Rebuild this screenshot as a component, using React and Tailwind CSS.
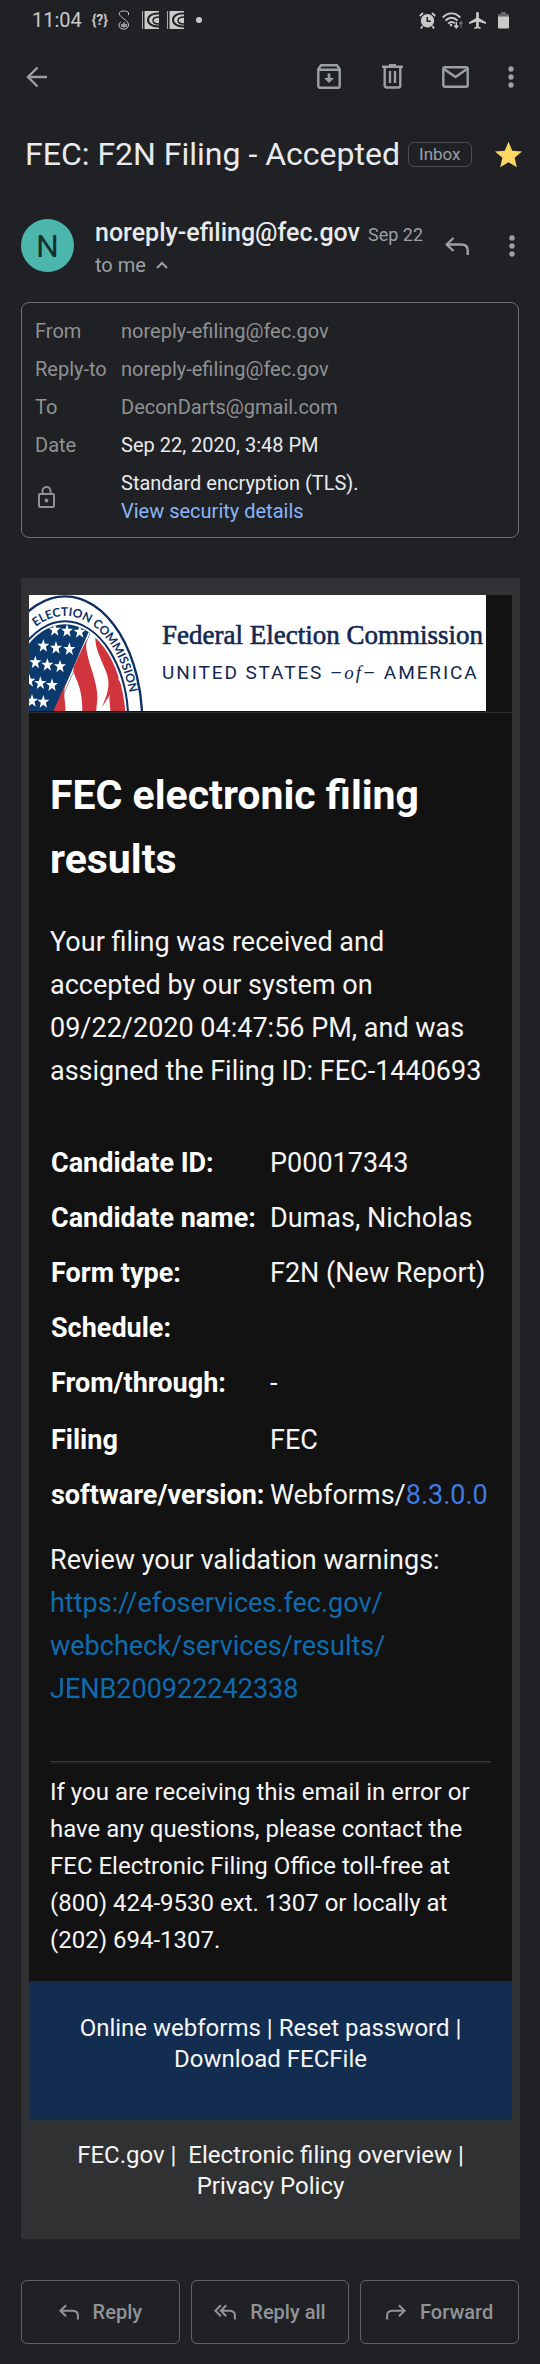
import React from "react";

const messageMeta = [
  { label: "From", value: "noreply-efiling@fec.gov" },
  { label: "Reply-to", value: "noreply-efiling@fec.gov" },
  { label: "To", value: "DeconDarts@gmail.com" },
  { label: "Date", value: "Sep 22, 2020, 3:48 PM", bright: true },
];

const filingRows = [
  { label: "Candidate ID:", value: "P00017343" },
  { label: "Candidate name:", value: "Dumas, Nicholas" },
  { label: "Form type:", value: "F2N (New Report)" },
  { label: "Schedule:", value: "" },
  { label: "From/through:", value: "-" },
];

const flagStars = [
  [80, 112], [117, 115], [155, 118],
  [46, 160], [84, 166], [124, 170],
  [22, 210], [58, 217], [96, 222],
  [4, 265], [37, 272], [72, 278],
  [12, 325], [46, 328],
];

function CrescentIcon() {
  return (
    <svg className="h-[18px] w-[17px]" viewBox="0 0 17 18" aria-hidden="true">
      <path d="M.5 0v18" stroke="#a9aaab" />
      <path d="M2.5 0H17V18H2.500Z" fill="#c9cac9" />
      <path d="M17 2.500C10 2 6 5 6 9c0 4 5 7 11 6.500" fill="none" stroke="#202124" strokeWidth="2" />
      <path d="M17 6c-4 0-6 1-6 3.500S13 13 17 13" fill="none" stroke="#202124" strokeWidth="1.500" />
    </svg>
  );
}

function StatusBar() {
  return (
    <div className="flex h-10 items-center justify-between pr-[31px] pl-8 text-[#c9cac9]">
      <div className="flex items-center">
        <span className="text-xl leading-6">11:04</span>
        <span className="ml-2 w-5 text-center text-sm leading-5 font-bold">{"{?}"}</span>
        <svg className="ml-2 h-5 w-3" viewBox="0 0 12 20" fill="none" stroke="currentColor" aria-hidden="true">
          <path d="M10.500 5V2.500C9.500.7 3 .3 1.500 2.500.5 5 3 6.500 5.500 8.500S10.500 12 10.500 15c0 5.500-9.500 5.500-9.500 0 0-1.500 1-2.500 2-3" strokeWidth="1" />
          <path d="M4 17v-3M6 17.500v-5M8 17v-3" strokeWidth="1.400" />
        </svg>
        <span className="ml-3 flex gap-2">
          <CrescentIcon />
          <CrescentIcon />
        </span>
        <span className="ml-3 size-1.5 rounded-full bg-[#c9cac9]" />
      </div>
      <div className="flex items-center gap-1.5">
        <svg className="size-[17px]" viewBox="0 0 17 17" aria-hidden="true">
          <path d="M.8 4 4 1M16.200 4 13 1M3.500 14 2 16.500M13.500 14l1.500 2.500" stroke="currentColor" strokeWidth="1.800" />
          <circle cx="8.500" cy="8.800" r="6.700" fill="currentColor" />
          <path d="M8.300 5v4.300h3.500" fill="none" stroke="#202124" strokeWidth="1.600" />
        </svg>
        <svg className="h-[17px] w-[21px]" viewBox="0 0 21 17" fill="none" stroke="currentColor" aria-hidden="true">
          <path d="M.8 5.500c5-5.500 12.400-5.500 17.400 0M3.500 8.700c3.500-3.900 8.500-3.900 12 0M6.200 11.600c2-2 4.600-2 6.600-.3" strokeWidth="1.900" />
          <circle cx="9" cy="13" r="1.300" fill="currentColor" stroke="none" />
          <path d="M14.300 10v5.500M12.300 13.500l2 2.300 2-2.300" strokeWidth="1.500" />
          <path d="M19 15.500V10M17.400 11.700 19 10l1.600 1.700" stroke="#77797b" strokeWidth="1.200" />
        </svg>
        <svg className="size-[17px]" viewBox="2 2 19 20" fill="currentColor" preserveAspectRatio="none" aria-hidden="true">
          <path d="M21 16v-2l-8-5V3.500a1.500 1.500 0 0 0-3 0V9l-8 5v2l8-2.500V19l-2 1.500V22l3.500-1 3.500 1v-1.500L13 19v-5.500z" />
        </svg>
        <svg className="ml-1.5 h-[17px] w-[11px]" viewBox="0 0 11 17" aria-hidden="true">
          <path d="M3 0h5v2h3v4H0V2h3Z" fill="#626466" />
          <path d="M0 4.500h11V15.500a1 1 0 0 1-1 1H1a1 1 0 0 1-1-1Z" fill="currentColor" />
        </svg>
      </div>
    </div>
  );
}

function MoreDots() {
  return (
    <svg className="h-[22px] w-1.5" viewBox="0 0 6 22" fill="currentColor" aria-hidden="true">
      <circle cx="3" cy="3" r="2.700" />
      <circle cx="3" cy="11" r="2.700" />
      <circle cx="3" cy="19" r="2.700" />
    </svg>
  );
}

function ReplyArrow({ className }) {
  return (
    <svg className={className} viewBox="0 0 24 18" fill="none" stroke="currentColor" strokeWidth="2.400" aria-hidden="true">
      <path d="M8.500 1 1.700 7.500l6.800 6.500M2 7.500h14.500c4 0 6.200 2.500 6.200 6V18" />
    </svg>
  );
}

function ReplyAllArrow({ className }) {
  return (
    <svg className={className} viewBox="0 0 26 18" fill="none" stroke="currentColor" strokeWidth="2.400" aria-hidden="true">
      <path d="M8 1 1.700 7.500 8 14M14.500 1 8.200 7.500l6.300 6.500M8.500 7.500h10c4 0 6.200 2.500 6.200 6V18" />
    </svg>
  );
}

function Toolbar() {
  return (
    <header className="flex h-[73px] items-center justify-between px-[26px] text-[#9aa0a6]">
      <button type="button" aria-label="Back">
        <svg className="h-[22px] w-[21px]" viewBox="0 0 21 22" fill="none" stroke="currentColor" strokeWidth="2.400" aria-hidden="true">
          <path d="M11.500 1.500 2 11l9.500 9.500M2 11h19" />
        </svg>
      </button>
      <div className="flex items-center">
        <button type="button" aria-label="Archive">
          <svg className="h-[25px] w-6" viewBox="0 0 24 25" fill="none" stroke="currentColor" strokeWidth="2.400" aria-hidden="true">
            <path d="M1.300 5.200 4 1.300h16l2.700 3.900V22a1.700 1.700 0 0 1-1.700 1.700H3A1.700 1.700 0 0 1 1.300 22ZM2 5.800h20" strokeLinejoin="round" />
            <path d="M12 9.500v7" strokeWidth="2.800" />
            <path d="M7 14h10l-5 5z" fill="currentColor" stroke="none" />
          </svg>
        </button>
        <button type="button" aria-label="Delete" className="ml-[41px]">
          <svg className="h-[25px] w-[21px]" viewBox="0 0 21 25" fill="none" stroke="currentColor" strokeWidth="2.400" aria-hidden="true">
            <path d="M0 2.700h21M7 1.200h7" />
            <path d="M2.700 3v18.500a2 2 0 0 0 2 2h11.600a2 2 0 0 0 2-2V3" />
            <path d="M8 7v12M13 7v12" />
          </svg>
        </button>
        <button type="button" aria-label="Mark as unread" className="ml-[39px]">
          <svg className="h-[22px] w-[27px]" viewBox="0 0 27 22" fill="none" stroke="currentColor" strokeWidth="2.400" aria-hidden="true">
            <rect x="1.300" y="1.300" width="24.400" height="19.400" rx="1.800" />
            <path d="m2 3 11.500 8L25 3" />
          </svg>
        </button>
        <button type="button" aria-label="More options" className="ml-[39px]">
          <MoreDots />
        </button>
      </div>
    </header>
  );
}

function FecSeal() {
  return (
    <svg className="h-[116px] w-[114px] shrink-0" viewBox="3 9 342 348" role="img" aria-label="Seal of the Federal Election Commission">
      <defs>
        <clipPath id="shield">
          <ellipse cx="111" cy="393" rx="182" ry="296" />
        </clipPath>
        <path id="ring" d="M-90 393A201 321 0 0 1 312 393" />
      </defs>
      <ellipse cx="111" cy="393" rx="232" ry="380" fill="#fff" stroke="#0f2f63" strokeWidth="7" />
      <ellipse cx="111" cy="393" rx="190" ry="305" fill="#fff" stroke="#0f2f63" strokeWidth="6" />
      <g clipPath="url(#shield)">
        <path d="M0 60h215L86 357H0z" fill="#0b3a6e" />
        <path d="M184 122 82 357" stroke="#fff" strokeWidth="5" />
        {flagStars.map(([x, y]) => (
          <path
            key={`${x}-${y}`}
            d="M0-19 4.500-5 18-5 7.500 4 11 19 0 10-11 19-7.500 4-18-5-4.500-5Z"
            fill="#fff"
            transform={`translate(${x} ${y})`}
          />
        ))}
        <g fill="#d0353d">
          <path d="M176 142C166 190 208 255 208 315 208 335 205 345 205 357H163C163 320 158 290 145 262 138 245 134 235 138 222Z" />
          <path d="M117 264C100 305 115 330 112 357H76Z" />
          <path d="M202 134C235 155 285 215 272 258 260 290 240 315 222 347 235 310 248 290 238 250 228 215 200 175 202 134Z" />
          <path d="M270 260C262 280 247 290 244 318L247 357H300C294 320 285 280 270 260Z" />
        </g>
      </g>
      <text fill="#0f2f63" fontSize="36" className="font-['Lato'] font-bold">
        <textPath href="#ring" startOffset="320">ELECTION COMMISSION</textPath>
      </text>
    </svg>
  );
}

function Banner() {
  return (
    <div className="border-b border-[#2c2d2e] pr-[26px] pb-px">
      <div className="flex h-[116px] bg-white">
        <FecSeal />
        <div className="ml-[19px] flex flex-col pt-5 whitespace-nowrap text-[#12284f]">
          <span className="font-['Liberation_Serif'] text-[27px] leading-10 [-webkit-text-stroke:0.6px_#12284f]">Federal Election Commission</span>
          <span className="text-[19px] leading-9 tracking-widest">
            UNITED STATES –<i className="font-['Liberation_Serif']">of</i>– AMERICA
          </span>
        </div>
      </div>
    </div>
  );
}

function MessageHeader() {
  return (
    <section className="px-[21px]">
      <div className="flex pt-6">
        <div className="flex size-[53px] shrink-0 items-center justify-center rounded-full bg-[#4db6ac] text-[32px] text-[#14302d]">N</div>
        <div className="ml-[21px] flex-1 whitespace-nowrap">
          <div className="flex items-baseline gap-2">
            <span className="text-[25px] leading-7 font-medium text-[#e8eaed]">noreply-efiling@fec.gov</span>
            <span className="text-lg leading-7 text-[#9aa0a6]">Sep 22</span>
          </div>
          <button type="button" className="mt-0.5 flex items-center gap-2.5 text-xl leading-7 text-[#9aa0a6]">
            to me
            <svg className="h-2 w-3" viewBox="0 0 12 8" fill="none" stroke="currentColor" strokeWidth="2" aria-hidden="true">
              <path d="m1 7 5-5 5 5" />
            </svg>
          </button>
        </div>
        <div className="flex h-[53px] items-center gap-10 pr-1 text-[#9aa0a6]">
          <button type="button" aria-label="Reply">
            <ReplyArrow className="h-[18px] w-6" />
          </button>
          <button type="button" aria-label="More options">
            <MoreDots />
          </button>
        </div>
      </div>
      <dl className="mt-[23px] grid grid-cols-[86px_1fr] gap-y-2.5 rounded-lg border border-[#6b6e72] px-[13px] pt-3.5 pb-3 text-xl leading-7 text-[#8f9194]">
        {messageMeta.map((row) => (
          <React.Fragment key={row.label}>
            <dt>{row.label}</dt>
            <dd className={row.bright ? "text-[#e8eaed]" : ""}>{row.value}</dd>
          </React.Fragment>
        ))}
        <dt className="flex items-center pl-[3px]" aria-label="Security">
          <svg className="h-[22px] w-[17px]" viewBox="0 0 17 22" fill="none" stroke="currentColor" strokeWidth="2" aria-hidden="true">
            <rect x="1" y="8" width="15" height="13" rx="1.200" />
            <path d="M4.500 8V5a4 4 0 0 1 8 0v3" />
            <circle cx="8.500" cy="14.500" r="1.900" fill="currentColor" stroke="none" />
          </svg>
        </dt>
        <dd className="text-[#e8eaed]">
          Standard encryption (TLS).
          <a href="#security" className="block text-[#8ab4f8]">View security details</a>
        </dd>
      </dl>
    </section>
  );
}

function EmailBody() {
  return (
    <article className="mt-10 mr-5 ml-[21px] bg-[#303133] px-2 pt-[17px] text-[#f5f5f5]">
      <div className="bg-[#121212]">
        <Banner />
        <div className="px-[21px] pt-[50px] pb-[22px]">
          <h2 className="text-[41px] leading-[64px] font-bold text-white">FEC electronic filing results</h2>
          <p className="mt-[30px] text-[27px] leading-[43px]">
            Your filing was received and accepted by our system on 09/22/2020 04:47:56 PM, and was assigned the Filing ID: FEC-1440693
          </p>
          <table className="mt-[43px] -mr-2 ml-px text-[27px] leading-[55px] whitespace-nowrap">
            <tbody>
              {filingRows.map((row) => (
                <tr key={row.label}>
                  <th scope="row" className="w-[219px] p-0 text-left font-bold text-white">{row.label}</th>
                  <td className="p-0">{row.value}</td>
                </tr>
              ))}
              <tr>
                <th scope="row" className="p-0 pt-0.5 text-left font-bold text-white">Filing<br />software/version:</th>
                <td className="p-0 pt-0.5">
                  FEC<br />Webforms/<a href="#version" className="text-[#3f7be0]">8.3.0.0</a>
                </td>
              </tr>
            </tbody>
          </table>
          <p className="mt-4 text-[27px] leading-[43px]">
            Review your validation warnings:
            <a href="#warnings" className="block text-[#0e6cae]">
              https://efoservices.fec.gov/<br />webcheck/services/results/<br />JENB200922242338
            </a>
          </p>
          <hr className="mt-[50px] h-[3px] border-t border-[#38393a] bg-[#1e1e1f]" />
          <p className="mt-2.5 text-2xl leading-[37px]">
            If you are receiving this email in error or have any questions, please contact the FEC Electronic Filing Office toll-free at (800) 424-9530 ext. 1307 or locally at (202) 694-1307.
          </p>
        </div>
      </div>
      <nav className="bg-[#132d50] px-10 pt-8 pb-[45px] text-center text-2xl leading-[31px]">
        <a href="#webforms">Online webforms</a> | <a href="#reset">Reset password</a> | <a href="#fecfile">Download FECFile</a>
      </nav>
      <footer className="px-10 pt-5 pb-[37px] text-center text-2xl leading-[31px]">
        <a href="#fec">FEC.gov</a> |&nbsp; <a href="#overview">Electronic filing overview</a> | <a href="#privacy">Privacy Policy</a>
      </footer>
    </article>
  );
}

function Action({ icon, children }) {
  return (
    <button type="button" className="flex h-16 items-center justify-center gap-3.5 rounded-md border border-[#5f6368]">
      {icon}
      {children}
    </button>
  );
}

export default function App() {
  return (
    <main className="min-h-screen bg-[#202124] font-['Roboto',sans-serif] text-[#e8eaed]">
      <StatusBar />
      <Toolbar />
      <div className="flex h-[82px] items-center pr-[18px] pl-[25px]">
        <h1 className="text-[32px] leading-10 whitespace-nowrap">FEC: F2N Filing - Accepted</h1>
        <span className="ml-2 rounded-md border border-[#4a4d51] px-2.5 text-[17px] leading-[23px] text-[#9aa0a6]">Inbox</span>
        <button type="button" aria-label="Starred" className="ml-auto">
          <svg className="size-[27px]" viewBox="2 2 20 19" fill="#fdd663" aria-hidden="true">
            <path d="M12 17.270 18.180 21l-1.640-7.030L22 9.240l-7.190-.61L12 2 9.190 8.630 2 9.240l5.460 4.730L5.820 21z" />
          </svg>
        </button>
      </div>
      <MessageHeader />
      <EmailBody />
      <div className="grid grid-cols-3 gap-[11px] px-[21px] pt-[41px] pb-[19px] text-xl font-medium text-[#8f9499]">
        <Action icon={<ReplyArrow className="h-4 w-5" />}>Reply</Action>
        <Action icon={<ReplyAllArrow className="h-4 w-[22px]" />}>Reply all</Action>
        <Action icon={<ReplyArrow className="h-4 w-5 -scale-x-100" />}>Forward</Action>
      </div>
    </main>
  );
}
